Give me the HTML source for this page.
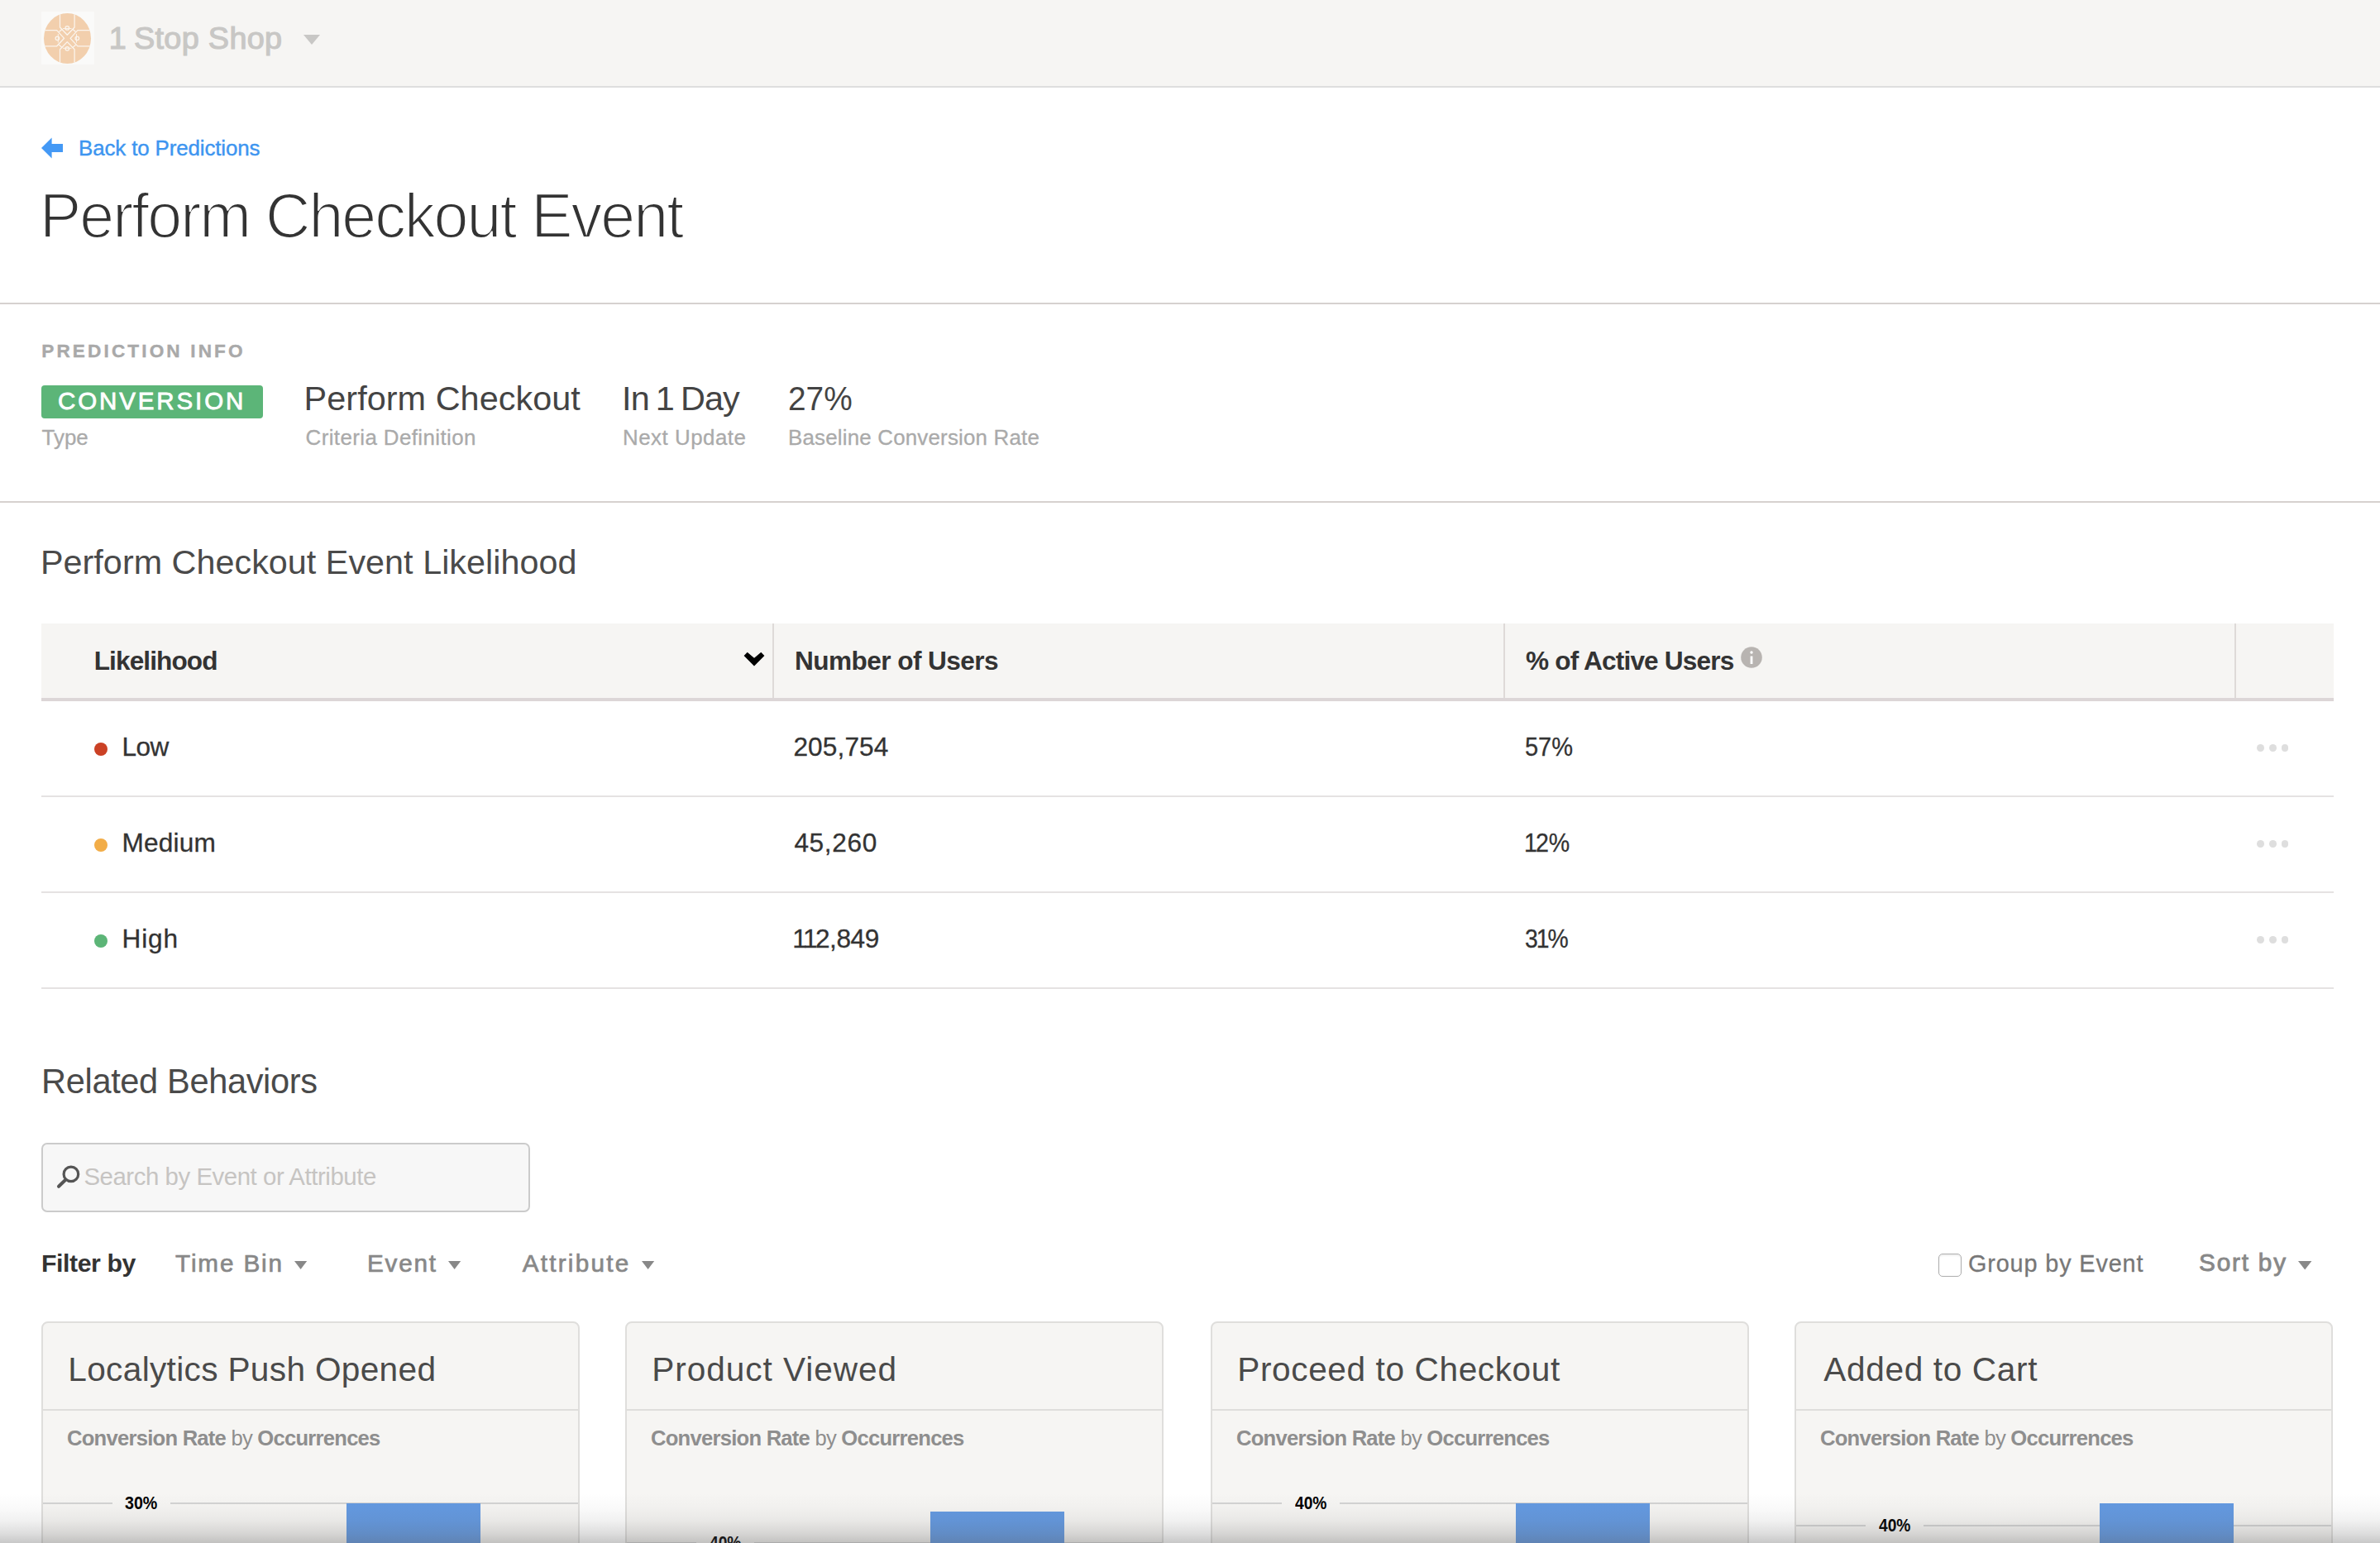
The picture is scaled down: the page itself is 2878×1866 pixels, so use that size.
<!DOCTYPE html>
<html><head><meta charset="utf-8"><style>
html,body{margin:0;padding:0;}
body{width:2878px;height:1866px;position:relative;overflow:hidden;background:#fff;font-family:"Liberation Sans", sans-serif;}
.t{position:absolute;white-space:nowrap;}
</style></head><body>
<div style="position:absolute;left:0px;top:0px;width:2878px;height:104px;background:#f6f5f3"></div>
<div style="position:absolute;left:0px;top:104px;width:2878px;height:2px;background:#dedede"></div>
<div style="position:absolute;left:50px;top:14px;width:64px;height:64px;background:#fafaf9"></div>
<svg style="position:absolute;left:50px;top:14px" width="64" height="64" viewBox="50 14 64 64">
<defs><clipPath id="lc"><ellipse cx="81.5" cy="46.5" rx="28.5" ry="30.5"/></clipPath></defs>
<ellipse cx="81.5" cy="46.5" rx="28.5" ry="30.5" fill="#f2cfad"/>
<g stroke="#fbf5ee" stroke-width="1.25" fill="none" clip-path="url(#lc)" stroke-linejoin="round">
<path d="M72.5 10 V33 L81.3 42.3 L90.1 33 V10"/>
<path d="M72.5 83 V59.7 L81.3 50.6 L90.1 59.7 V83"/>
<path d="M45 36.7 H68.7 L77.6 46.3 L68.7 55.8 H45"/>
<path d="M118 36.7 H93.9 L85.1 46.3 L93.9 55.8 H118"/>
<path d="M71.4 38.5 L75.2 35.3 M91.6 38.5 L87.8 35.3 M71.4 54.3 L75.2 57.6 M91.6 54.3 L87.8 57.6"/>
<circle cx="81.3" cy="33.9" r="2.3"/><circle cx="81.3" cy="58.8" r="2.3"/>
<circle cx="69.4" cy="46.3" r="2.3"/><circle cx="93.3" cy="46.3" r="2.3"/>
<path d="M76 34.5 H86.5 M76 58.3 H86.5 M70.3 41 V51.6 M92.5 41 V51.6" stroke-width="0.9"/>
</g></svg>
<div class="t" style="left:133.60px;top:28px;font-size:37.80px;line-height:37.80px;color:#c8c7c5;letter-spacing:0.320px;-webkit-text-stroke:1.2px #c8c7c5;"><span style="margin:0 -0.05em">1</span> Stop Shop</div>
<svg style="position:absolute;left:366px;top:41px" width="22" height="14"><path d="M1 1 H21 L11 13 Z" fill="#c8c7c5"/></svg>
<svg style="position:absolute;left:48px;top:164px" width="30" height="30" viewBox="48 164 30 30"><path d="M50 179 L62.6 166.4 V174 H76 V184 H62.6 V191.4 Z" fill="#4499f5"/></svg>
<div class="t" style="left:95.10px;top:167px;font-size:25.90px;line-height:25.90px;color:#3d95f0;letter-spacing:-0.128px;-webkit-text-stroke:0.4px #3d95f0;">Back to Predictions</div>
<div class="t" style="left:48.00px;top:224px;font-size:75.30px;line-height:75.30px;color:#333333;letter-spacing:-1.962px;-webkit-text-stroke:2.0px #fff;">Perform Checkout Event</div>
<div style="position:absolute;left:0px;top:366px;width:2878px;height:2px;background:#d6d1cf"></div>
<div class="t" style="left:50.20px;top:414px;font-size:22.60px;line-height:22.60px;color:#a9a9a9;font-weight:bold;letter-spacing:3.129px;-webkit-text-stroke:0.4px #a9a9a9;">PREDICTION INFO</div>
<div style="position:absolute;left:50px;top:466px;width:268px;height:40px;background:#5cb578;border-radius:4px"></div>
<div class="t" style="left:70.00px;top:470px;font-size:29.50px;line-height:29.50px;color:#ffffff;letter-spacing:2.889px;-webkit-text-stroke:0.8px #ffffff;">CONVERSION</div>
<div class="t" style="left:367.60px;top:462px;font-size:41.40px;line-height:41.40px;color:#444444;letter-spacing:0.047px;">Perform Checkout</div>
<div class="t" style="left:752.10px;top:462px;font-size:41.40px;line-height:41.40px;color:#444444;letter-spacing:-0.943px;">In <span style="margin:0 -0.06em">1</span> Day</div>
<div class="t" style="left:953.12px;top:462px;font-size:41.40px;line-height:41.40px;color:#444444;letter-spacing:0.000px;transform:scaleX(0.9375);transform-origin:0 0;">27%</div>
<div class="t" style="left:50.60px;top:517px;font-size:25.90px;line-height:25.90px;color:#aaaaaa;letter-spacing:0.000px;-webkit-text-stroke:0.3px #aaaaaa;">Type</div>
<div class="t" style="left:369.60px;top:517px;font-size:25.90px;line-height:25.90px;color:#aaaaaa;letter-spacing:0.400px;-webkit-text-stroke:0.3px #aaaaaa;">Criteria Definition</div>
<div class="t" style="left:753.00px;top:517px;font-size:25.90px;line-height:25.90px;color:#aaaaaa;letter-spacing:0.500px;-webkit-text-stroke:0.3px #aaaaaa;">Next Update</div>
<div class="t" style="left:953.00px;top:517px;font-size:25.90px;line-height:25.90px;color:#aaaaaa;letter-spacing:0.196px;-webkit-text-stroke:0.3px #aaaaaa;">Baseline Conversion Rate</div>
<div style="position:absolute;left:0px;top:606px;width:2878px;height:2px;background:#d6d1cf"></div>
<div class="t" style="left:49.00px;top:660px;font-size:41.30px;line-height:41.30px;color:#4a4a4a;letter-spacing:0.034px;">Perform Checkout Event Likelihood</div>
<div style="position:absolute;left:50px;top:754px;width:2772px;height:90px;background:#f6f5f3"></div>
<div style="position:absolute;left:50px;top:844px;width:2772px;height:4px;background:#dcd6d7"></div>
<div style="position:absolute;left:934px;top:754px;width:2px;height:90px;background:#dedad8"></div>
<div style="position:absolute;left:1818px;top:754px;width:2px;height:90px;background:#dedad8"></div>
<div style="position:absolute;left:2702px;top:754px;width:2px;height:90px;background:#dedad8"></div>
<div class="t" style="left:113.70px;top:784px;font-size:31.60px;line-height:31.60px;color:#333333;font-weight:bold;letter-spacing:-0.900px;">Likelihood</div>
<svg style="position:absolute;left:896px;top:784px" width="32" height="26" viewBox="896 784 32 26"><path d="M899.6 792.9 L903.7 788.8 L912 795.8 L920.3 788.8 L924.4 792.9 L912 805.4 Z" fill="#000"/></svg>
<div class="t" style="left:961.00px;top:784px;font-size:31.60px;line-height:31.60px;color:#333333;font-weight:bold;letter-spacing:-0.571px;">Number of Users</div>
<div class="t" style="left:1845.00px;top:784px;font-size:31.60px;line-height:31.60px;color:#333333;font-weight:bold;letter-spacing:-0.844px;">% of Active Users</div>
<svg style="position:absolute;left:2104px;top:781px" width="28" height="28" viewBox="2104 781 28 28"><circle cx="2118" cy="795" r="12.8" fill="#b8b4b1"/><rect x="2116.6" y="793.5" width="2.8" height="9.5" fill="#fff"/><circle cx="2118" cy="789" r="1.7" fill="#fff"/></svg>
<div style="position:absolute;left:114px;top:898px;width:16px;height:16px;border-radius:50%;background:#cb4125"></div>
<div class="t" style="left:147.50px;top:888px;font-size:31.60px;line-height:31.60px;color:#333333;letter-spacing:-0.550px;-webkit-text-stroke:0.3px #333333;">Low</div>
<div class="t" style="left:959.40px;top:888px;font-size:31.60px;line-height:31.60px;color:#333333;letter-spacing:0.133px;-webkit-text-stroke:0.3px #333333;">205,754</div>
<div class="t" style="left:1843.78px;top:888px;font-size:31.60px;line-height:31.60px;color:#333333;letter-spacing:0.000px;transform:scaleX(0.9177);transform-origin:0 0;-webkit-text-stroke:0.3px #333333;">57%</div>
<div style="position:absolute;left:50px;top:962px;width:2772px;height:2px;background:#e5e2e2"></div>
<div style="position:absolute;left:2729.2px;top:900.0px;width:8.8px;height:8.8px;border-radius:50%;background:#dedede"></div>
<div style="position:absolute;left:2744.0px;top:900.0px;width:8.8px;height:8.8px;border-radius:50%;background:#dedede"></div>
<div style="position:absolute;left:2758.6px;top:900.0px;width:8.8px;height:8.8px;border-radius:50%;background:#dedede"></div>
<div style="position:absolute;left:114px;top:1014px;width:16px;height:16px;border-radius:50%;background:#f2ad48"></div>
<div class="t" style="left:147.50px;top:1004px;font-size:31.60px;line-height:31.60px;color:#333333;letter-spacing:0.200px;-webkit-text-stroke:0.3px #333333;">Medium</div>
<div class="t" style="left:960.40px;top:1004px;font-size:31.60px;line-height:31.60px;color:#333333;letter-spacing:0.660px;-webkit-text-stroke:0.3px #333333;">45,260</div>
<div class="t" style="left:1844.70px;top:1004px;font-size:31.60px;line-height:31.60px;color:#333333;letter-spacing:0.000px;transform:scaleX(0.9052);transform-origin:0 0;-webkit-text-stroke:0.3px #333333;"><span style="margin:0 -0.07em">1</span>2%</div>
<div style="position:absolute;left:50px;top:1078px;width:2772px;height:2px;background:#e5e2e2"></div>
<div style="position:absolute;left:2729.2px;top:1016.0px;width:8.8px;height:8.8px;border-radius:50%;background:#dedede"></div>
<div style="position:absolute;left:2744.0px;top:1016.0px;width:8.8px;height:8.8px;border-radius:50%;background:#dedede"></div>
<div style="position:absolute;left:2758.6px;top:1016.0px;width:8.8px;height:8.8px;border-radius:50%;background:#dedede"></div>
<div style="position:absolute;left:114px;top:1130px;width:16px;height:16px;border-radius:50%;background:#5cb577"></div>
<div class="t" style="left:147.50px;top:1120px;font-size:31.60px;line-height:31.60px;color:#333333;letter-spacing:0.833px;-webkit-text-stroke:0.3px #333333;">High</div>
<div class="t" style="left:960.40px;top:1120px;font-size:31.60px;line-height:31.60px;color:#333333;letter-spacing:-0.417px;-webkit-text-stroke:0.3px #333333;"><span style="margin:0 -0.07em">1</span><span style="margin:0 -0.07em">1</span>2,849</div>
<div class="t" style="left:1843.80px;top:1120px;font-size:31.60px;line-height:31.60px;color:#333333;letter-spacing:0.000px;transform:scaleX(0.8965);transform-origin:0 0;-webkit-text-stroke:0.3px #333333;">3<span style="margin:0 -0.07em">1</span>%</div>
<div style="position:absolute;left:50px;top:1194px;width:2772px;height:2px;background:#e5e2e2"></div>
<div style="position:absolute;left:2729.2px;top:1132.0px;width:8.8px;height:8.8px;border-radius:50%;background:#dedede"></div>
<div style="position:absolute;left:2744.0px;top:1132.0px;width:8.8px;height:8.8px;border-radius:50%;background:#dedede"></div>
<div style="position:absolute;left:2758.6px;top:1132.0px;width:8.8px;height:8.8px;border-radius:50%;background:#dedede"></div>
<div class="t" style="left:50.10px;top:1287px;font-size:41.60px;line-height:41.60px;color:#4a4a4a;letter-spacing:-0.375px;">Related Behaviors</div>
<div style="position:absolute;left:50px;top:1382px;width:591px;height:84px;background:#f7f7f7;border:2px solid #cbcbcb;border-radius:7px;box-sizing:border-box"></div>
<svg style="position:absolute;left:64px;top:1404px" width="40" height="40" viewBox="64 1404 40 40"><circle cx="85.9" cy="1419.9" r="8.8" stroke="#555" stroke-width="3.2" fill="none"/><path d="M79 1427 L71 1434.8" stroke="#555" stroke-width="4" stroke-linecap="round"/></svg>
<div class="t" style="left:101.40px;top:1408px;font-size:29.40px;line-height:29.40px;color:#c6c4c2;letter-spacing:-0.448px;">Search by Event or Attribute</div>
<div class="t" style="left:50.00px;top:1513px;font-size:30.30px;line-height:30.30px;color:#333333;font-weight:bold;letter-spacing:-0.438px;">Filter by</div>
<div class="t" style="left:212.00px;top:1513px;font-size:29.70px;line-height:29.70px;color:#888888;letter-spacing:1.857px;-webkit-text-stroke:0.7px #888888;">Time Bin</div>
<div class="t" style="left:444.00px;top:1513px;font-size:29.70px;line-height:29.70px;color:#888888;letter-spacing:1.750px;-webkit-text-stroke:0.7px #888888;">Event</div>
<div class="t" style="left:631.70px;top:1513px;font-size:29.70px;line-height:29.70px;color:#888888;letter-spacing:2.238px;-webkit-text-stroke:0.7px #888888;">Attribute</div>
<svg style="position:absolute;left:355.9px;top:1524.7px" width="17" height="12"><path d="M0 0 H15.2 L7.6 10.1 Z" fill="#888"/></svg>
<svg style="position:absolute;left:541.6px;top:1524.7px" width="17" height="12"><path d="M0 0 H15.2 L7.6 10.1 Z" fill="#888"/></svg>
<svg style="position:absolute;left:775.5px;top:1524.7px" width="17" height="12"><path d="M0 0 H15.2 L7.6 10.1 Z" fill="#888"/></svg>
<div style="position:absolute;left:2344px;top:1516px;width:28px;height:28px;background:#fff;border:1.5px solid #adadad;border-radius:5px;box-sizing:border-box;box-shadow:inset 0 2px 2px rgba(0,0,0,0.06)"></div>
<div class="t" style="left:2379.90px;top:1514px;font-size:28.80px;line-height:28.80px;color:#777777;letter-spacing:0.885px;-webkit-text-stroke:0.3px #777777;">Group by Event</div>
<div class="t" style="left:2659.00px;top:1512px;font-size:29.70px;line-height:29.70px;color:#888888;letter-spacing:1.833px;-webkit-text-stroke:0.9px #888888;">Sort by</div>
<svg style="position:absolute;left:2779px;top:1524.7px" width="17" height="12"><path d="M0 0 H16.4 L8.2 10.5 Z" fill="#888"/></svg>
<div style="position:absolute;left:50.00px;top:1598px;width:651px;height:400px;background:#f6f5f3;border:2px solid #dfdedc;border-radius:8px;box-sizing:border-box"></div>
<div style="position:absolute;left:50.00px;top:1704px;width:651px;height:2px;background:#dfdedc"></div>
<div class="t" style="left:82.30px;top:1636px;font-size:40.60px;line-height:40.60px;color:#4a4a4a;letter-spacing:0.338px;">Localytics Push Opened</div>
<div class="t" style="left:81.00px;top:1727px;font-size:25.60px;line-height:25.60px;color:#8e8e8e;letter-spacing:-0.752px;"><b>Conversion Rate</b> by <b>Occurrences</b></div>
<div style="position:absolute;left:52.00px;top:1817.0px;width:84px;height:2px;background:#d3d3d3"></div>
<div style="position:absolute;left:206.00px;top:1817.0px;width:493px;height:2px;background:#d3d3d3"></div>
<div style="position:absolute;left:419.00px;top:1817.6px;width:162px;height:100px;background:#6399e1"></div>
<div class="t" style="left:151.10px;top:1807px;font-size:21.90px;line-height:21.90px;color:#000000;font-weight:bold;letter-spacing:0.000px;transform:scaleX(0.8976);transform-origin:0 0;">30%</div>
<div style="position:absolute;left:756.00px;top:1598px;width:651px;height:400px;background:#f6f5f3;border:2px solid #dfdedc;border-radius:8px;box-sizing:border-box"></div>
<div style="position:absolute;left:756.00px;top:1704px;width:651px;height:2px;background:#dfdedc"></div>
<div class="t" style="left:788.30px;top:1636px;font-size:40.60px;line-height:40.60px;color:#4a4a4a;letter-spacing:0.946px;">Product Viewed</div>
<div class="t" style="left:787.00px;top:1727px;font-size:25.60px;line-height:25.60px;color:#8e8e8e;letter-spacing:-0.752px;"><b>Conversion Rate</b> by <b>Occurrences</b></div>
<div style="position:absolute;left:758.00px;top:1865.0px;width:84px;height:2px;background:#d3d3d3"></div>
<div style="position:absolute;left:912.00px;top:1865.0px;width:493px;height:2px;background:#d3d3d3"></div>
<div style="position:absolute;left:1125.00px;top:1828.0px;width:162px;height:100px;background:#6399e1"></div>
<div class="t" style="left:858.00px;top:1855px;font-size:21.90px;line-height:21.90px;color:#000000;font-weight:bold;letter-spacing:0.000px;transform:scaleX(0.8767);transform-origin:0 0;">40%</div>
<div style="position:absolute;left:1464.00px;top:1598px;width:651px;height:400px;background:#f6f5f3;border:2px solid #dfdedc;border-radius:8px;box-sizing:border-box"></div>
<div style="position:absolute;left:1464.00px;top:1704px;width:651px;height:2px;background:#dfdedc"></div>
<div class="t" style="left:1496.30px;top:1636px;font-size:40.60px;line-height:40.60px;color:#4a4a4a;letter-spacing:0.611px;">Proceed to Checkout</div>
<div class="t" style="left:1495.00px;top:1727px;font-size:25.60px;line-height:25.60px;color:#8e8e8e;letter-spacing:-0.752px;"><b>Conversion Rate</b> by <b>Occurrences</b></div>
<div style="position:absolute;left:1466.00px;top:1817.0px;width:84px;height:2px;background:#d3d3d3"></div>
<div style="position:absolute;left:1620.00px;top:1817.0px;width:493px;height:2px;background:#d3d3d3"></div>
<div style="position:absolute;left:1833.00px;top:1818.0px;width:162px;height:100px;background:#6399e1"></div>
<div class="t" style="left:1566.00px;top:1807px;font-size:21.90px;line-height:21.90px;color:#000000;font-weight:bold;letter-spacing:0.000px;transform:scaleX(0.8767);transform-origin:0 0;">40%</div>
<div style="position:absolute;left:2170.00px;top:1598px;width:651px;height:400px;background:#f6f5f3;border:2px solid #dfdedc;border-radius:8px;box-sizing:border-box"></div>
<div style="position:absolute;left:2170.00px;top:1704px;width:651px;height:2px;background:#dfdedc"></div>
<div class="t" style="left:2205.30px;top:1636px;font-size:40.60px;line-height:40.60px;color:#4a4a4a;letter-spacing:0.650px;">Added to Cart</div>
<div class="t" style="left:2201.00px;top:1727px;font-size:25.60px;line-height:25.60px;color:#8e8e8e;letter-spacing:-0.752px;"><b>Conversion Rate</b> by <b>Occurrences</b></div>
<div style="position:absolute;left:2172.00px;top:1843.8px;width:84px;height:2px;background:#d3d3d3"></div>
<div style="position:absolute;left:2326.00px;top:1843.8px;width:493px;height:2px;background:#d3d3d3"></div>
<div style="position:absolute;left:2539.00px;top:1818.0px;width:162px;height:100px;background:#6399e1"></div>
<div class="t" style="left:2272.00px;top:1834px;font-size:21.90px;line-height:21.90px;color:#000000;font-weight:bold;letter-spacing:0.000px;transform:scaleX(0.8767);transform-origin:0 0;">40%</div>
<div style="position:absolute;left:0px;top:1806px;width:2878px;height:60px;background:linear-gradient(to bottom, rgba(90,90,90,0) 0%, rgba(90,90,90,0.03) 30%, rgba(90,90,90,0.085) 55%, rgba(90,90,90,0.2) 80%, rgba(90,90,90,0.335) 100%)"></div>
</body></html>
